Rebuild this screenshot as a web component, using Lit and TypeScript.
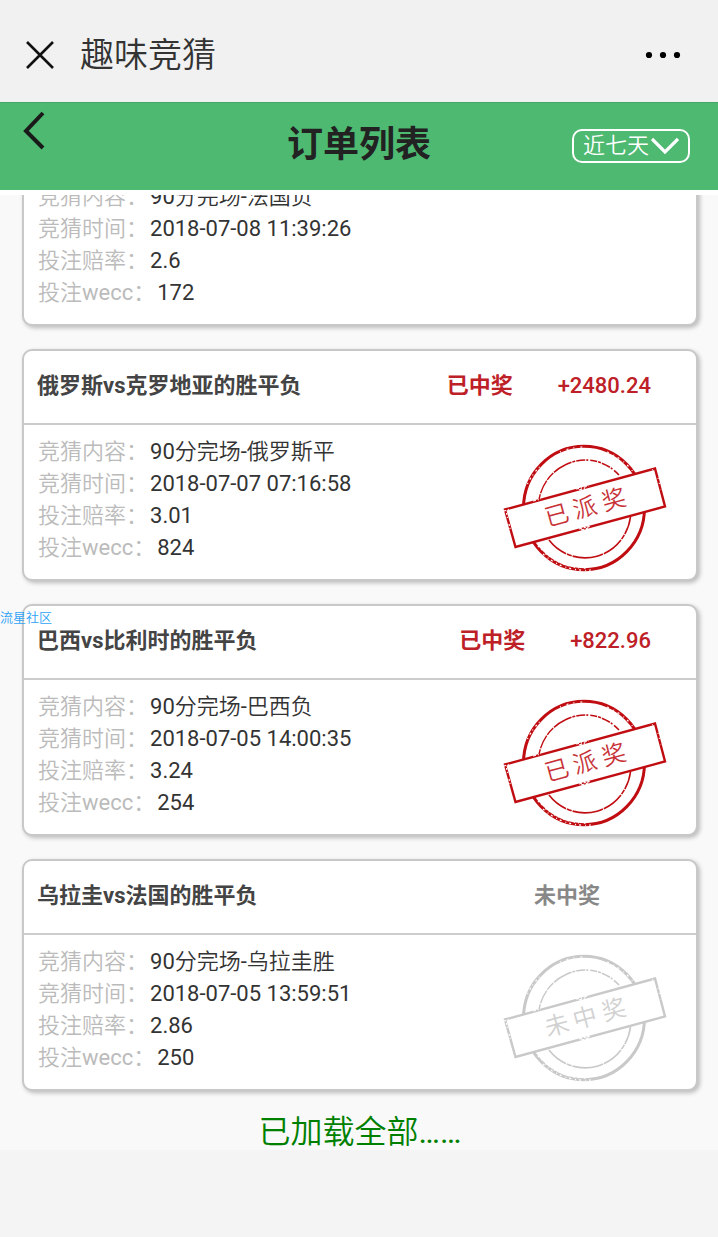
import { LitElement, html, css, svg, nothing } from "lit";
import { customElement, property } from "lit/decorators.js";

interface Order {
  title: string;
  status: string;
  amount: string;
  won: boolean;
  content: string;
  time: string;
  odds: string;
  wecc: string;
  stamp: string;
}

const ORDERS: Order[] = [
  { title: "", status: "", amount: "", won: false, content: "90分完场-法国负", time: "2018-07-08 11:39:26", odds: "2.6", wecc: "172", stamp: "" },
  { title: "俄罗斯vs克罗地亚的胜平负", status: "已中奖", amount: "+2480.24", won: true, content: "90分完场-俄罗斯平", time: "2018-07-07 07:16:58", odds: "3.01", wecc: "824", stamp: "已派奖" },
  { title: "巴西vs比利时的胜平负", status: "已中奖", amount: "+822.96", won: true, content: "90分完场-巴西负", time: "2018-07-05 14:00:35", odds: "3.24", wecc: "254", stamp: "已派奖" },
  { title: "乌拉圭vs法国的胜平负", status: "未中奖", amount: "", won: false, content: "90分完场-乌拉圭胜", time: "2018-07-05 13:59:51", odds: "2.86", wecc: "250", stamp: "未中奖" },
];

@customElement("order-stamp")
class OrderStamp extends LitElement {
  @property() text = "";
  @property({ type: Boolean, reflect: true }) won = false;

  static styles = css`
    :host { display: block; flex: none; width: 166px; height: 130px; color: #c9c9c9; }
    :host([won]) { color: #c00d12; }
    svg { display: block; width: 100%; height: 100%; }
    .word { font: 400 24px Roboto, "Noto Sans CJK SC DemiLight", "Noto Sans CJK SC", sans-serif; fill: currentColor; opacity: 0.85; }
  `;

  render() {
    return html`<svg viewBox="0 0 166 130" fill="none" stroke="currentColor" role="img" aria-label=${this.text}>
      ${svg`
        <ellipse cx="81" cy="64" rx="60.5" ry="61.7" stroke-width="3"/>
        <path d="M35.500 59A46 47.500 0 0 1 62 21" stroke-width="1.400" stroke-dasharray="9 1 14 1"/>
        <path d="M62 21A46 47.500 0 0 1 116 31" stroke-width="1.600" stroke-dasharray="7 1 3 1 9 1 2 2"/>
        <path d="M46 96A46 47.500 0 0 0 127.500 73" stroke-width="1.600" stroke-dasharray="22 1 5 1 31 1"/>
        <g stroke="#fff" stroke-width="1.2">
          <path d="M24.500 40a62 62 0 0 1 14-19" stroke-dasharray="1 4 2 3"/>
          <path d="M57 8a60 60 0 0 1 24-5" stroke-dasharray="1 6 2 5"/>
          <path d="M104 8a60 60 0 0 1 27 21" stroke-dasharray="2 5 1 4"/>
          <path d="M35 102a61 61 0 0 0 50 22" stroke-dasharray="1.500 3 1 5"/>
          <path d="M40 110a63 63 0 0 0 48 16" stroke-dasharray="2 4 1 3"/>
        </g>
        <path d="M2 65.500L152 24.500L162 62.500L12.500 103Z" fill="#fff" stroke-width="2.400"/>
        <g stroke="#fff" stroke-width="1.2">
          <path d="M1 67l6-2M3.500 69l1 5M6 80l2 8" stroke-dasharray="2 2 1 4"/>
          <path d="M73 45l13-3M76 46l7-2M30 57l8-2" stroke-dasharray="3 2 1 2"/>
          <path d="M76 85l12-3M78 86l8-2" stroke-dasharray="3 2 2 1"/>
          <path d="M149 26l4-1M155 34l3 12" stroke-dasharray="1 4 1 6"/>
        </g>
        <g transform="translate(82 64) rotate(-15.300)" stroke="none">
          <text class="word" text-anchor="start" x="-41 -12 18" y="8">${this.text}</text>
        </g>`}
    </svg>`;
  }
}

@customElement("order-card")
class OrderCard extends LitElement {
  @property({ attribute: false }) order!: Order;

  static styles = css`
    :host { display: block; }
    .card { border: 2px solid #c8c8c8; border-radius: 10px; background: #fff; box-shadow: 2px 2px 4px #bbb; color: #333; }
    .head { display: flex; align-items: center; gap: 45px; height: 70px; padding: 0 45px 2px 13px; border-bottom: 2px solid #ccc; font-family: Roboto, "Noto Sans CJK SC", sans-serif; font-size: 22px; font-weight: 500; line-height: 32px; }
    h2 { flex: 1; margin: 0; font: inherit; font-weight: 700; color: #444; }
    .amount { min-width: 6px; }
    .status { color: #888; font-weight: 700; }
    .won { color: #be2027; }
    .body { display: flex; justify-content: space-between; padding: 11px 27px 15px 14px; }
    dl { margin: 0; font-size: 22px; line-height: 32px; }
    .row { display: flex; gap: 2px; }
    dt { color: #bbb; }
    dd { margin: 0; }
    order-stamp { margin-top: 8px; margin-bottom: -10px; }
  `;

  render() {
    const o = this.order;
    const tone = o.won ? "won" : "";
    const rows = [["竞猜内容：", o.content], ["竞猜时间：", o.time], ["投注赔率：", o.odds], ["投注wecc：", o.wecc]];
    return html`<article class="card">
      <header class="head">
        <h2>${o.title}</h2>
        <span class="status ${tone}">${o.status}</span>
        <span class="amount ${tone}">${o.amount}</span>
      </header>
      <div class="body">
        <dl>${rows.map(([k, v]) => html`<div class="row"><dt>${k}</dt><dd>${v}</dd></div>`)}</dl>
        ${o.stamp ? html`<order-stamp .text=${o.stamp} ?won=${o.won}></order-stamp>` : nothing}
      </div>
    </article>`;
  }
}

@customElement("app-root")
class AppRoot extends LitElement {
  static styles = css`
    :host { display: block; position: relative; min-height: 100vh; background: #f4f4f4; font-family: Roboto, "Noto Sans CJK SC DemiLight", "Noto Sans CJK SC", sans-serif; }
    button { display: block; padding: 0; border: 0; background: none; color: #111; }
    svg { display: block; }
    .bar { display: flex; align-items: center; height: 102px; padding: 7px 34px 0 24px; box-sizing: border-box; background: #f1f1f1; }
    .name { flex: 1; margin-left: 24px; font-size: 34px; line-height: 48px; color: #333; }
    .top { display: grid; grid-template-columns: 1fr auto 1fr; align-items: center; height: 88px; padding: 0 28px; box-sizing: border-box; border-top: 1px solid #45a566; background: #4db971; }
    .back { align-self: start; justify-self: start; margin: 8px 0 0 -6px; }
    h1 { margin: 0; padding-bottom: 4px; font: 700 36px/48px Roboto, "Noto Sans CJK SC", sans-serif; color: #222; }
    .range { display: flex; align-items: center; justify-self: end; height: 34px; margin-bottom: 2px; padding: 0 9px; box-sizing: border-box; border: 2px solid #fff; border-radius: 10px; color: #fff; }
    select { appearance: none; width: 68px; height: 30px; padding: 0; border: 0; background: none; color: inherit; font: 400 22px/30px Roboto, "Noto Sans CJK SC DemiLight", "Noto Sans CJK SC", sans-serif; }
    option { color: #333; }
    .list { display: flex; flex-direction: column; gap: 23px; padding: 0 20px 0 22px; border-top: 5px solid #fff; background: #f9f9f9; overflow: hidden; }
    .list order-card:first-child { margin-top: -101px; }
    .end { margin: 0; font-size: 32px; line-height: 36px; text-align: center; color: #008000; }
    .mark { position: absolute; left: 0; top: 610px; font-size: 13px; line-height: 16px; color: #2ea3f7; }
  `;

  render() {
    return html`
      <header class="bar">
        <button aria-label="关闭"><svg width="32" height="32" viewBox="0 0 32 32" fill="none" stroke="#111" stroke-width="2.600"><path d="M3 3L29 29M29 3L3 29"/></svg></button>
        <span class="name">趣味竞猜</span>
        <button aria-label="更多"><svg width="40" height="12" viewBox="0 0 40 12" fill="#000"><circle cx="5" cy="6" r="3.100"/><circle cx="19" cy="6" r="3.100"/><circle cx="33" cy="6" r="3.100"/></svg></button>
      </header>
      <nav class="top">
        <button class="back" aria-label="返回"><svg width="24" height="40" viewBox="0 0 24 40" fill="none" stroke="#1a1a1a" stroke-width="4"><path d="M21 2L4 20L21 37"/></svg></button>
        <h1>订单列表</h1>
        <label class="range">
          <select aria-label="时间范围"><option>近七天</option></select>
          <svg width="28" height="18" viewBox="0 0 28 18" fill="none" stroke="#fff" stroke-width="3.200"><path d="M1 2L14 15L27 2"/></svg>
        </label>
      </nav>
      <main class="list">
        ${ORDERS.map((o) => html`<order-card .order=${o}></order-card>`)}
        <p class="end">已加载全部……</p>
      </main>
      <span class="mark">流星社区</span>
    `;
  }
}
